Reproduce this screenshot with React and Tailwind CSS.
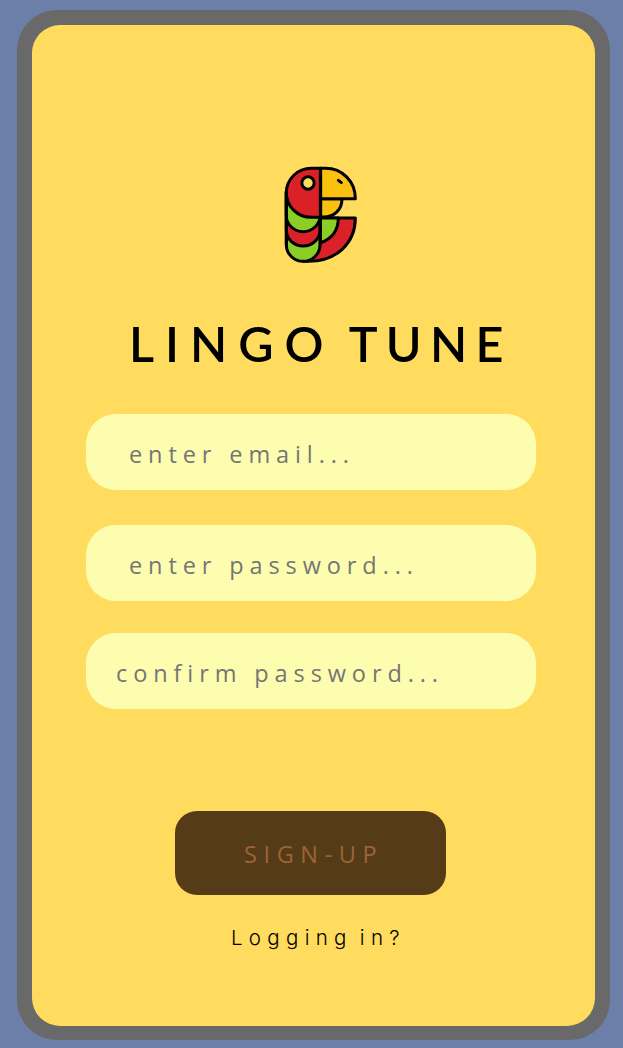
function Parrot() {
  return (
    <svg viewBox="0 0 300 360" className="h-[120px] w-[100px]" stroke="#000" strokeWidth="9" strokeLinejoin="round" aria-hidden="true">
      <path d="M150 189H256C256 264 200 319 115 319H100Z" fill="#da2128" />
      <path d="M150 189H205C205 226 185 252 150 264Z" fill="#8ace27" />
      <path d="M49 110H150V269A50.500 50 0 0 1 49 269Z" fill="#8ace27" />
      <path d="M49 120H150V225A50.500 48 0 0 1 49 225Z" fill="#da2128" />
      <path d="M49 110H150V182A50.500 48 0 0 1 49 182Z" fill="#8ace27" />
      <path d="M152 40H124C82 40 49 73 49 113C49 154 82 187 124 187H152Z" fill="#da2128" />
      <path d="M152 131H216C216 163 194 186 160 186H152Z" fill="#fcc00e" />
      <path d="M152 40H166C218 40 256 80 256 131H152Z" fill="#fcc00e" />
      <path d="M49 108V269M151 40V269" fill="none" />
      <circle cx="114" cy="84" r="18.500" fill="#ffdc60" />
      <path d="M205 76L214 83" strokeLinecap="round" />
    </svg>
  );
}

function Field({ placeholder, type = "text", className }) {
  return (
    <input
      type={type}
      placeholder={placeholder}
      aria-label={placeholder}
      className={`block h-[76px] w-[450px] rounded-[30px] bg-[#fdfdaf] pt-[3px] font-['Open_Sans',sans-serif] text-[23.500px] font-normal tracking-[5.900px] outline-none placeholder:text-[#757575] ${className}`}
    />
  );
}

export default function App() {
  return (
    <main className="h-[1048px] w-full overflow-hidden bg-[#6b7fa8] pt-[10px] pl-[17px]">
      <section className="h-[1030px] w-[593px] rounded-[40px] bg-[#696969] px-[15px] pt-[15px] pb-[14px]">
        <form className="flex h-full flex-col items-start rounded-[28px] bg-[#ffdb5e] pl-[54px]">
          <div className="mt-[130px] ml-[184px]">
            <Parrot />
          </div>
          <h1 className="mt-[33px] ml-[43px] h-[71px] font-[Lato,sans-serif] text-[48.500px] leading-[70px] font-semibold tracking-[11px] whitespace-nowrap [word-spacing:-9px]">
            LINGO <span className="tracking-[8.300px]">TUNE</span>
          </h1>
          <Field placeholder="enter email..." className="mt-[35px] pl-[43px]" />
          <Field placeholder="enter password..." className="mt-[35px] pl-[43px]" />
          <Field placeholder="confirm password..." className="mt-[32px] pl-[30px]" />
          <button type="button" className="mt-[102px] ml-[89px] h-[84px] w-[271px] rounded-[22px] bg-[#553b17] pt-[3px] pl-[69px] text-left font-['Open_Sans',sans-serif] text-[23.500px] font-normal tracking-[6.600px] text-[#9c6435]">
            SIGN-UP
          </button>
          <a href="#" className="mt-[27px] ml-[145px] font-[Inter,sans-serif] text-[20.500px] leading-[32px] font-light tracking-[6.300px] whitespace-nowrap text-black [word-spacing:-5px]">
            Logging in?
          </a>
        </form>
      </section>
    </main>
  );
}
